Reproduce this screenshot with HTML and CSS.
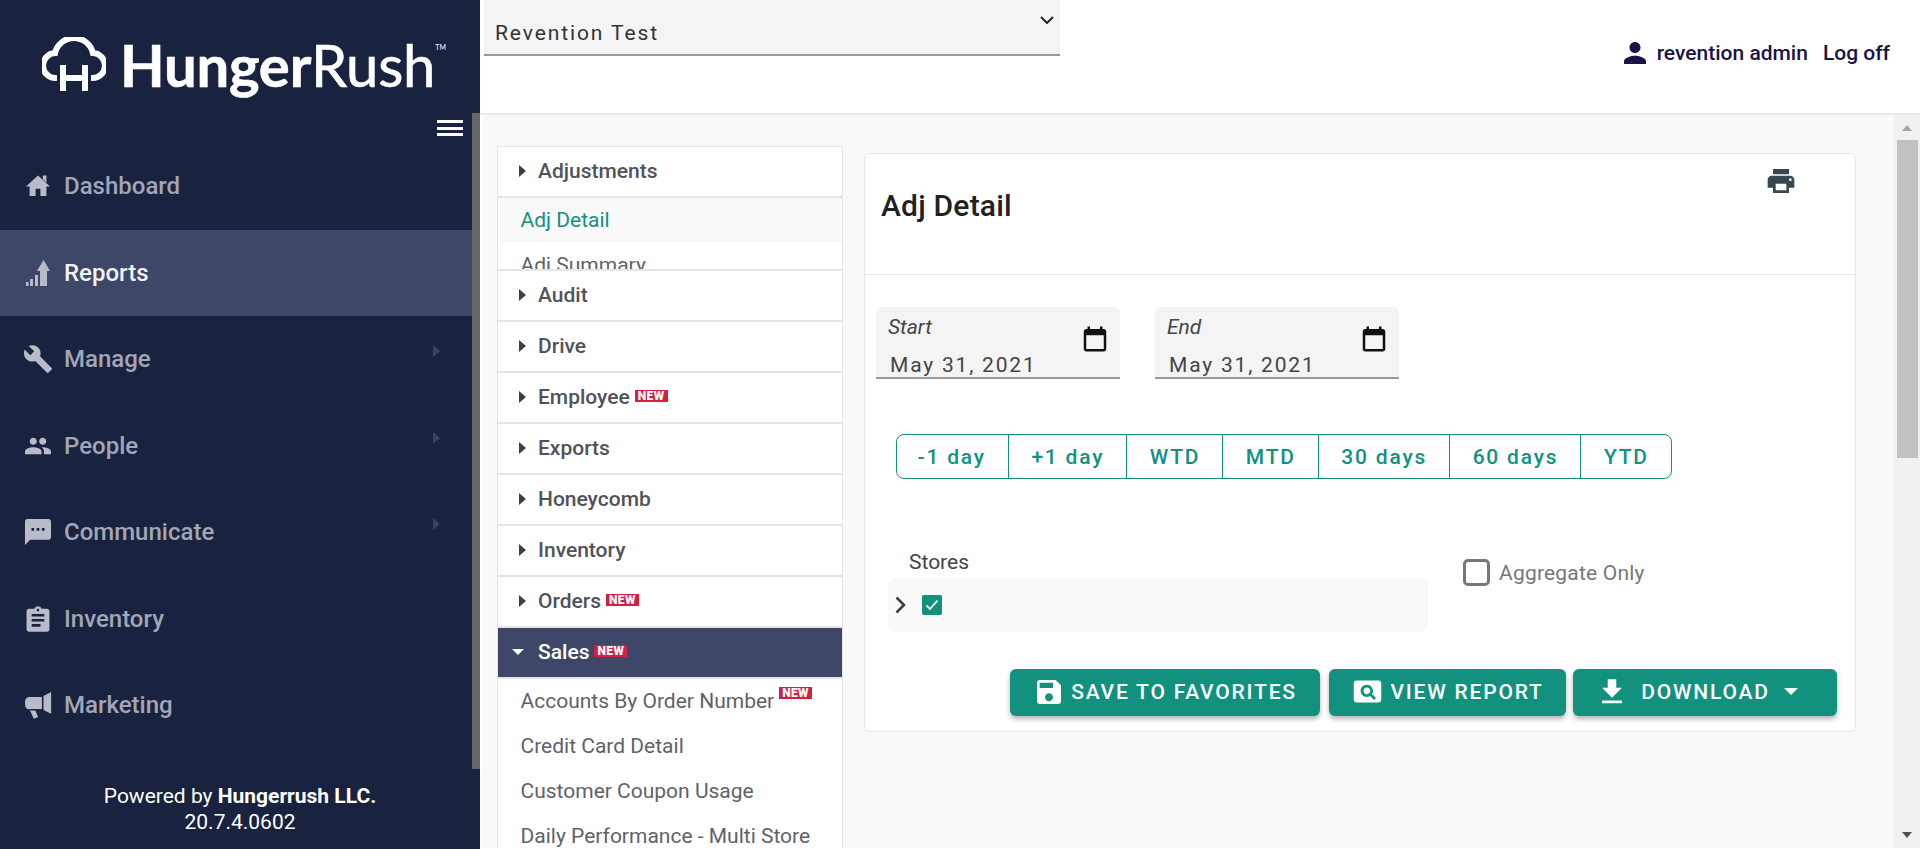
FILE: index.html
```html
<!DOCTYPE html>
<html lang="en">
<head>
  <meta charset="UTF-8">
  <title>Reports - Adj Detail</title>
  <link rel="stylesheet" href="styles.css">
</head>
<body>
  <aside class="sidebar">
    <div class="sidebar-thumb"></div>
    <div class="brand">
      <svg class="brand-mark" viewBox="0 0 64 54" fill="none" stroke="#fff">
        <path stroke-width="6" d="M15 41h-1a12 12 0 0 1-1-24.900a19.500 19.500 0 0 1 38 0a12 12 0 0 1-1 24.900h-1"/>
        <path stroke-width="6" d="M21 28v26M43 28v26M21 41h22"/>
      </svg>
      <span class="brand-name"><b>Hunger</b>Rush</span>
      <span class="brand-tm">TM</span>
    </div>
    <div class="burger"><span></span><span></span><span></span></div>
    <nav class="nav">
      <a class="nav-item">
        <svg class="nav-icon" viewBox="0.35 0 23.3 23.3"><path d="M10 20v-6h4v6h5v-8h3L12 3 2 12h3v8z"/><path d="M16 3h3v6l-3-3z"/></svg>
        Dashboard
      </a>
      <a class="nav-item active">
        <svg class="nav-icon" viewBox="-2 -1 28 28"><path d="M0 22h2.500v4H0zM4 19h3v7H4zM9 15h3v11H9zM14 11V26h7V11h3L17.500 0 11 11z"/></svg>
        Reports
      </a>
      <a class="nav-item">
        <svg class="nav-icon" viewBox="1 1 22 22"><path d="M22.700 19l-9.100-9.100c.9-2.300.4-5-1.500-6.900-2-2-5-2.400-7.400-1.300L9 6 6 9 1.600 4.700C.4 7.100.9 10.100 2.900 12.100c1.900 1.900 4.600 2.400 6.900 1.500l9.100 9.100c.4.400 1 .4 1.400 0l2.300-2.300c.5-.4.5-1.100.1-1.400z"/></svg>
        Manage
        <i class="nav-arrow"></i>
      </a>
      <a class="nav-item">
        <svg class="nav-icon" viewBox="0.15 0.15 23.7 23.7"><path d="M16 11c1.660 0 2.990-1.340 2.990-3S17.660 5 16 5c-1.660 0-3 1.340-3 3s1.340 3 3 3zm-8 0c1.660 0 2.990-1.340 2.990-3S9.660 5 8 5C6.340 5 5 6.340 5 8s1.340 3 3 3zm0 2c-2.330 0-7 1.170-7 3.500V19h14v-2.500c0-2.330-4.670-3.500-7-3.500zm8 0c-.29 0-.62.02-.97.05 1.160.84 1.970 1.970 1.970 3.450V19h6v-2.500c0-2.330-4.670-3.500-7-3.500z"/></svg>
        People
        <i class="nav-arrow"></i>
      </a>
      <a class="nav-item">
        <svg class="nav-icon" viewBox="1.25 1.25 21.5 21.5"><path fill-rule="evenodd" d="M20 2H4c-1.100 0-1.990.9-1.990 2L2 22l4-4h14c1.100 0 2-.9 2-2V4c0-1.100-.9-2-2-2zM9 11H7V9h2v2zm4 0h-2V9h2v2zm4 0h-2V9h2v2z"/></svg>
        Communicate
        <i class="nav-arrow"></i>
      </a>
      <a class="nav-item">
        <svg class="nav-icon" viewBox="1 0 22 22"><path fill-rule="evenodd" d="M19 3h-4.180C14.400 1.840 13.300 1 12 1c-1.300 0-2.400.84-2.820 2H5c-1.100 0-2 .9-2 2v14c0 1.100.9 2 2 2h14c1.100 0 2-.9 2-2V5c0-1.100-.9-2-2-2zm-7 0c.55 0 1 .45 1 1s-.45 1-1 1-1-.45-1-1 .45-1 1-1zm2 14H7v-2h7v2zm3-4H7v-2h10v2zm0-4H7V7h10v2z"/></svg>
        Inventory
      </a>
      <a class="nav-item">
        <svg class="nav-icon" viewBox="-1 -1 25.800 25.800"><path d="M24 0v20l-7-3.500V3.500zM15.500 4.500v11H5.500A4 4 0 0 1 0 11.500v-3a4 4 0 0 1 4-4zM4.500 17h5l2.500 6-4 1.500z"/></svg>
        Marketing
      </a>
    </nav>
    <footer class="powered">
      <div>Powered by <b>Hungerrush LLC.</b></div>
      <div>20.7.4.0602</div>
    </footer>
  </aside>

  <div class="main">
    <header class="topbar">
      <div class="store-select">
        <span>Revention Test</span>
        <svg class="store-chevron" viewBox="0 0 14 8" fill="none" stroke="#222" stroke-width="2"><path d="M1 1l6 6 6-6"/></svg>
      </div>
      <div class="user">
        <svg class="user-icon" viewBox="4 4 16 16"><path d="M12 12c2.210 0 4-1.790 4-4s-1.790-4-4-4-4 1.790-4 4 1.790 4 4 4zm0 2c-2.670 0-8 1.340-8 4v2h16v-2c0-2.660-5.330-4-8-4z"/></svg>
        <span class="user-name">revention admin</span>
        <span>Log off</span>
      </div>
    </header>

    <div class="workspace">
      <div class="content">
        <div class="tree">
          <div class="tree-head"><i class="caret"></i>Adjustments</div>
          <div class="tree-sub clipped">
            <div class="tree-link current">Adj Detail</div>
            <div class="tree-link">Adj Summary</div>
          </div>
          <div class="tree-head with-top"><i class="caret"></i>Audit</div>
          <div class="tree-head"><i class="caret"></i>Drive</div>
          <div class="tree-head"><i class="caret"></i>Employee <span class="badge">NEW</span></div>
          <div class="tree-head"><i class="caret"></i>Exports</div>
          <div class="tree-head"><i class="caret"></i>Honeycomb</div>
          <div class="tree-head"><i class="caret"></i>Inventory</div>
          <div class="tree-head"><i class="caret"></i>Orders <span class="badge">NEW</span></div>
          <div class="tree-head open"><i class="caret"></i>Sales <span class="badge">NEW</span></div>
          <div class="tree-sub">
            <div class="tree-link">Accounts By Order Number <span class="badge raised">NEW</span></div>
            <div class="tree-link">Credit Card Detail</div>
            <div class="tree-link">Customer Coupon Usage</div>
            <div class="tree-link">Daily Performance - Multi Store</div>
          </div>
        </div>

        <section class="card">
          <div class="card-head">
            <h1>Adj Detail</h1>
            <svg class="print-icon" viewBox="0 0 24 24"><path fill-rule="evenodd" d="M19 8H5c-1.660 0-3 1.340-3 3v6h4v4h12v-4h4v-6c0-1.660-1.340-3-3-3zm-3 11H8v-5h8v5zm3-7c-.55 0-1-.45-1-1s.45-1 1-1 1 .45 1 1-.45 1-1 1zm-1-9H6v4h12V3z"/></svg>
          </div>
          <div class="card-body">
            <div class="dates">
              <div class="date-field">
                <label>Start</label>
                <span class="date-value">May 31, 2021</span>
                <svg class="cal-icon" viewBox="0 0 24 24"><path fill-rule="evenodd" d="M19 4h-1V2h-2v2H8V2H6v2H5c-1.100 0-2 .9-2 2v14c0 1.100.9 2 2 2h14c1.100 0 2-.9 2-2V6c0-1.100-.9-2-2-2zm0 16H5V9h14v11z"/></svg>
              </div>
              <div class="date-field">
                <label>End</label>
                <span class="date-value">May 31, 2021</span>
                <svg class="cal-icon" viewBox="0 0 24 24"><path fill-rule="evenodd" d="M19 4h-1V2h-2v2H8V2H6v2H5c-1.100 0-2 .9-2 2v14c0 1.100.9 2 2 2h14c1.100 0 2-.9 2-2V6c0-1.100-.9-2-2-2zm0 16H5V9h14v11z"/></svg>
              </div>
            </div>

            <div class="ranges">
              <button>-1 day</button>
              <button>+1 day</button>
              <button>WTD</button>
              <button>MTD</button>
              <button>30 days</button>
              <button>60 days</button>
              <button>YTD</button>
            </div>

            <div class="filters">
              <div class="stores">
                <div class="stores-label">Stores</div>
                <div class="stores-tree">
                  <svg class="stores-chevron" viewBox="0 0 11 18" fill="none" stroke="#3c3f4a" stroke-width="2.500"><path d="M1.500 1.500L9 9l-7.500 7.500"/></svg>
                  <span class="check">
                    <svg viewBox="0 0 14 12" fill="none" stroke="#fff" stroke-width="1.800"><path d="M1.500 6.500L5 10l7.500-8.500"/></svg>
                  </span>
                </div>
              </div>
              <div class="aggregate"><span class="box"></span>Aggregate Only</div>
            </div>

            <div class="actions">
              <button class="action save">
                <svg viewBox="0 0 24 24"><path fill-rule="evenodd" d="M17 3H5c-1.110 0-2 .9-2 2v14c0 1.100.89 2 2 2h14c1.100 0 2-.9 2-2V7l-4-4zm-5 16c-1.660 0-3-1.340-3-3s1.340-3 3-3 3 1.340 3 3-1.340 3-3 3zm3-10H5V5h10v4z"/></svg>
                SAVE TO FAVORITES
              </button>
              <button class="action view">
                <svg viewBox="0 0 24 24"><path fill-rule="evenodd" d="M11.500 9C10.120 9 9 10.120 9 11.500s1.120 2.500 2.500 2.500 2.500-1.120 2.500-2.500S12.880 9 11.500 9zM20 4H4c-1.100 0-2 .9-2 2v12c0 1.100.9 2 2 2h16c1.100 0 2-.9 2-2V6c0-1.100-.9-2-2-2zm-3.210 14.210l-2.910-2.910c-.69.44-1.510.7-2.380.7C9.010 16 7 13.990 7 11.500S9.010 7 11.500 7 16 9.010 16 11.500c0 .88-.26 1.690-.7 2.390l2.910 2.900-1.420 1.420z"/></svg>
                VIEW REPORT
              </button>
              <button class="action download">
                <svg viewBox="0 0 24 24"><path d="M19 9h-4V3H9v6H5l7 7 7-7zM5 18v2h14v-2H5z"/></svg>
                <span>DOWNLOAD</span>
                <i class="drop-caret"></i>
              </button>
            </div>
          </div>
        </section>
      </div>

      <div class="scrollbar">
        <i class="scroll-up"></i>
        <div class="scroll-thumb"></div>
        <i class="scroll-down"></i>
      </div>
    </div>
  </div>
</body>
</html>
```

FILE: styles.css
```css
* {
  box-sizing: border-box;
}
html, body {
  height: 100%;
}
body {
  margin: 0;
  display: flex;
  overflow: hidden;
  font-family: Roboto, sans-serif;
  color: #4a4d55;
  background-color: #fff;
}

/* Sidebar */
.sidebar {
  position: relative;
  width: 480px;
  flex: none;
  display: flex;
  flex-direction: column;
  background-color: #19233f;
}
.sidebar-thumb {
  position: absolute;
  top: 113px;
  right: 0;
  width: 8px;
  height: 656px;
  background-color: #666;
  z-index: 1;
}
.brand {
  height: 115px;
  padding: 37px 0 0 42px;
  display: flex;
  align-items: flex-start;
  color: #fff;
}
.brand-mark {
  width: 64px;
  height: 54px;
  flex: none;
}
.brand-name {
  margin: -3px 0 0 14px;
  font-family: Lato, sans-serif;
  font-size: 58px;
  line-height: 62px;
  letter-spacing: -0.2px;
  font-weight: 400;
  -webkit-text-stroke: 0.6px #fff;
}
.brand-name b {
  font-weight: 700;
}
.brand-tm {
  font-family: Lato, sans-serif;
  font-size: 7px;
  margin: 6px 0 0 0;
}
.burger {
  height: 28px;
  padding: 5px 17px 0 0;
  display: flex;
  flex-direction: column;
  align-items: flex-end;
  gap: 3.500px;
}
.burger span {
  display: block;
  width: 26px;
  height: 3px;
  background-color: #fff;
}
.nav-item {
  height: 86.500px;
  padding: 0 40px 0 24px;
  display: flex;
  align-items: center;
  font-size: 24px;
  font-weight: 500;
  color: #a2a6b5;
}
.nav-item.active {
  color: #f1f2f6;
  background-color: #3e4768;
}
.nav-icon {
  width: 28px;
  height: 28px;
  margin-right: 12px;
  flex: none;
  fill: #b9bcc8;
}
.nav-arrow {
  width: 0;
  height: 0;
  margin: -16px 0 0 auto;
  border-left: 7px solid #3c4556;
  border-top: 6px solid transparent;
  border-bottom: 6px solid transparent;
}
.powered {
  margin-top: auto;
  padding-bottom: 14px;
  text-align: center;
  font-size: 21px;
  line-height: 26px;
  color: #fff;
}

/* Top bar */
.main {
  flex: 1;
  min-width: 0;
  display: flex;
  flex-direction: column;
  padding-bottom: 1px;
}
.topbar {
  height: 115px;
  flex: none;
  padding: 0 30px 0 4px;
  display: flex;
  justify-content: space-between;
  align-items: flex-start;
  border-bottom: 2px solid #e8e8e8;
}
.store-select {
  width: 576px;
  height: 56px;
  padding: 0 6px 0 11px;
  display: flex;
  justify-content: space-between;
  background-color: #f4f4f4;
  border-bottom: 2px solid #999;
  font-size: 21px;
  letter-spacing: 1.900px;
  color: #333;
}
.store-select span {
  margin-top: 21px;
}
.store-chevron {
  width: 14px;
  height: 8px;
  margin-top: 16px;
}
.user {
  margin-top: 41px;
  display: flex;
  align-items: center;
  font-size: 21px;
  font-weight: 500;
  color: #1a1348;
}
.user-icon {
  width: 22px;
  height: 22px;
  margin-right: 11px;
  fill: #1a1348;
}
.user-name {
  margin-right: 15px;
}

/* Content */
.workspace {
  flex: 1;
  min-height: 0;
  display: flex;
  padding-left: 2px;
}
.content {
  flex: 1;
  min-width: 0;
  padding: 31px 0 0 15px;
  display: flex;
  align-items: flex-start;
  background-color: #f9f9f9;
  overflow: hidden;
}
.tree {
  width: 346px;
  flex: none;
  background-color: #fff;
  border: 1px solid #e5e5e5;
  border-bottom: 0;
}
.tree-head {
  height: 51px;
  padding: 0 0 1px 21px;
  display: flex;
  align-items: center;
  font-size: 21px;
  font-weight: 500;
  color: #505359;
  border-bottom: 2px solid #e5e5e5;
}
.tree-head.with-top {
  height: 53px;
  border-top: 2px solid #e5e5e5;
}
.tree-head.open {
  padding-left: 14px;
  color: #fff;
  background-color: #3e4768;
  background-clip: padding-box;
}
.caret {
  width: 0;
  height: 0;
  margin-right: 12px;
  border-left: 7px solid #37404a;
  border-top: 6px solid transparent;
  border-bottom: 6px solid transparent;
}
.open .caret {
  margin-right: 14px;
  margin-left: 0;
  border-left: 6px solid transparent;
  border-right: 6px solid transparent;
  border-top: 6px solid #fff;
  border-bottom: 0;
}
.badge {
  margin: -2px 0 0 5px;
  padding: 0 3px;
  height: 12px;
  display: inline-block;
  font-size: 12px;
  line-height: 12px;
  font-weight: 900;
  letter-spacing: 0.4px;
  color: #fff;
  background-color: #d21f42;
}
.badge.raised {
  margin: -17px 0 0 5px;
}
.tree-sub.clipped {
  height: 71px;
  overflow: hidden;
}
.tree-link {
  height: 45px;
  padding: 0 0 1px 22.500px;
  display: flex;
  align-items: center;
  font-size: 21px;
  color: #5f6268;
}
.tree-link.current {
  color: #12917f;
  background-color: #f9f9f9;
}

/* Report card */
.card {
  width: 992px;
  margin: 7px 0 0 21px;
  flex: none;
  background-color: #fff;
  border: 1px solid #e5e5e5;
  border-radius: 6px;
}
.card-head {
  height: 121px;
  padding: 35px 58px 0 16px;
  display: flex;
  justify-content: space-between;
  align-items: flex-start;
  border-bottom: 1px solid #e5e5e5;
}
.card-head h1 {
  margin: 0;
  font-size: 30px;
  line-height: 34px;
  font-weight: 500;
  letter-spacing: 0.2px;
  color: #212121;
}
.print-icon {
  width: 32px;
  height: 32px;
  margin-top: -24px;
  fill: #37474f;
}
.card-body {
  padding: 32px 18px 15px 11px;
}
.dates {
  display: flex;
  gap: 35px;
}
.date-field {
  position: relative;
  width: 244px;
  height: 72px;
  padding: 8px 12px 0;
  display: flex;
  flex-direction: column;
  background-color: #f4f4f4;
  border-bottom: 2px solid #999;
  border-radius: 6px 6px 0 0;
}
.date-field label {
  font-size: 21px;
  line-height: 24px;
  font-style: italic;
  color: #444;
}
.date-value {
  margin: 14px 0 0 2px;
  font-size: 21px;
  line-height: 24px;
  letter-spacing: 1.800px;
  color: #444;
}
.cal-icon {
  position: absolute;
  top: 17px;
  right: 10px;
  width: 30px;
  height: 30px;
  fill: #111;
}
.ranges {
  margin: 55px 0 0 20px;
  display: flex;
}
.ranges button {
  height: 45px;
  margin-left: -1.500px;
  padding: 0 22.500px;
  font-family: inherit;
  font-size: 21px;
  font-weight: 500;
  letter-spacing: 1.800px;
  color: #12917f;
  background-color: #fff;
  border: 1.500px solid #12917f;
}
.ranges button:first-child {
  margin-left: 0;
  padding-left: 20.500px;
  border-radius: 8px 0 0 8px;
}
.ranges button:last-child {
  border-radius: 0 8px 8px 0;
}
.filters {
  margin-top: 71px;
  padding-left: 12px;
  display: flex;
  align-items: flex-start;
}
.stores {
  width: 540px;
}
.stores-label {
  padding-left: 21px;
  font-size: 21px;
  line-height: 24px;
  color: #444;
}
.stores-tree {
  height: 54px;
  margin-top: 4px;
  padding-left: 7px;
  display: flex;
  align-items: center;
  gap: 16px;
  background-color: #f9f9f9;
  border-radius: 8px;
}
.stores-chevron {
  width: 11px;
  height: 18px;
}
.check {
  width: 20px;
  height: 20px;
  display: flex;
  align-items: center;
  justify-content: center;
  background-color: #12917f;
  border-radius: 2px;
}
.check svg {
  width: 14px;
  height: 12px;
}
.aggregate {
  margin: 9px 0 0 35px;
  display: flex;
  align-items: center;
  gap: 9px;
  font-size: 21px;
  letter-spacing: 0.2px;
  color: #777;
}
.box {
  width: 27px;
  height: 27px;
  border: 3px solid #777;
  border-radius: 5px;
}
.actions {
  margin-top: 37px;
  display: flex;
  justify-content: flex-end;
}
.action {
  height: 47px;
  padding: 0 0 2px;
  display: flex;
  align-items: center;
  justify-content: center;
  font-family: inherit;
  font-size: 21px;
  font-weight: 500;
  letter-spacing: 1.800px;
  color: #fff;
  background-color: #12917f;
  border: 0;
  border-radius: 6px;
  box-shadow: 0 3px 5px rgba(0, 0, 0, 0.3);
}
.action svg {
  fill: #fff;
  flex: none;
}
.save {
  width: 310px;
}
.save svg {
  width: 32px;
  height: 32px;
  margin-right: 6px;
}
.view {
  width: 237px;
  margin-left: 9px;
}
.view svg {
  width: 33px;
  height: 33px;
  margin-right: 6px;
}
.download {
  width: 264px;
  margin-left: 7px;
  padding-right: 17px;
}
.download svg {
  width: 34px;
  height: 34px;
  margin-right: 12px;
}
.drop-caret {
  width: 0;
  height: 0;
  margin-left: 14px;
  border-left: 7px solid transparent;
  border-right: 7px solid transparent;
  border-top: 7px solid #fff;
}

/* Page scrollbar */
.scrollbar {
  width: 26px;
  flex: none;
  display: flex;
  flex-direction: column;
  align-items: center;
  background-color: #f1f1f1;
}
.scroll-up {
  width: 0;
  height: 0;
  margin-top: 10px;
  border-left: 5.500px solid transparent;
  border-right: 5.500px solid transparent;
  border-bottom: 6px solid #a3a3a3;
}
.scroll-thumb {
  width: 21px;
  height: 318px;
  margin-top: 9px;
  background-color: #c1c1c1;
}
.scroll-down {
  width: 0;
  height: 0;
  margin-top: auto;
  margin-bottom: 10px;
  border-left: 5.500px solid transparent;
  border-right: 5.500px solid transparent;
  border-top: 6px solid #505050;
}
```
